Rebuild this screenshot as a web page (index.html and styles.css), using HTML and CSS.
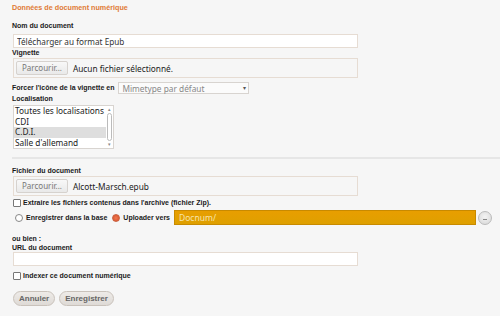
FILE: index.html
```html
<!DOCTYPE html>
<html lang="fr">
<head>
    <meta charset="UTF-8">
    <title>Données de document numérique</title>
    <link rel="stylesheet" href="styles.css">
</head>
<body>
    <form class="docnum">
        <h3 class="title">Données de document numérique</h3>

        <label class="lbl lbl-first" for="nom">Nom du document</label>
        <input class="text" type="text" id="nom" value="Télécharger au format Epub">

        <label class="lbl">Vignette</label>
        <div class="filebox">
            <span class="browse">Parcourir...</span>
            <span class="filename">Aucun fichier sélectionné.</span>
        </div>

        <div class="row row-force">
            <span class="lbl inline">Forcer l'icône de la vignette en</span>
            <div class="select">
                <span>Mimetype par défaut</span>
                <span class="caret">&#9662;</span>
            </div>
        </div>

        <label class="lbl">Localisation</label>
        <div class="listbox">
            <ul>
                <li>Toutes les localisations</li>
                <li>CDI</li>
                <li class="sel">C.D.I.</li>
                <li>Salle d'allemand</li>
            </ul>
            <div class="scroll">
                <span class="arrow">&#9652;</span>
                <span class="thumb"></span>
                <span class="arrow">&#9662;</span>
            </div>
        </div>

        <hr class="sep">

        <label class="lbl">Fichier du document</label>
        <div class="filebox">
            <span class="browse">Parcourir...</span>
            <span class="filename">Alcott-Marsch.epub</span>
        </div>

        <div class="row row-check">
            <span class="check"></span>
            <span class="lbl inline">Extraire les fichiers contenus dans l'archive (fichier Zip).</span>
        </div>

        <div class="row row-radio">
            <span class="radio"></span>
            <span class="lbl inline">Enregistrer dans la base</span>
            <span class="radio on"></span>
            <span class="lbl inline">Uploader vers</span>
            <div class="upload">Docnum/</div>
            <span class="dots"></span>
        </div>

        <label class="lbl lbl-or">ou bien :</label>
        <label class="lbl lbl-url" for="url">URL du document</label>
        <input class="text" type="text" id="url">

        <div class="row row-check2">
            <span class="check"></span>
            <span class="lbl inline">Indexer ce document numérique</span>
        </div>

        <div class="actions">
            <button type="button" class="btn">Annuler</button>
            <button type="button" class="btn">Enregistrer</button>
        </div>
    </form>
</body>
</html>
```

FILE: styles.css
```css
body {
    margin: 0;
    background: #f6f6f6;
    font-family: "Liberation Sans", Arial, sans-serif;
    color: #222;
}

.docnum {
    padding: 3px 0 0 12px;
}

.title {
    margin: 0;
    font-size: 7.2px;
    line-height: 10px;
    font-weight: bold;
    color: #e07a35;
}

.lbl {
    display: block;
    font-size: 7px;
    line-height: 10px;
    font-weight: bold;
    color: #1a1a1a;
    white-space: nowrap;
}

.lbl.inline {
    display: inline-block;
    flex-shrink: 0;
}

.lbl-first {
    margin-top: 8px;
}

.text {
    display: block;
    box-sizing: border-box;
    width: 345px;
    height: 14px;
    margin: 3px 0 0 1px;
    padding: 0 3px;
    border: 1px solid #e6dcd3;
    background: #fff;
    font-family: "Noto Sans", sans-serif;
    font-size: 8.2px;
    color: #333;
    outline: none;
}

.filebox {
    box-sizing: border-box;
    width: 345px;
    height: 20px;
    margin-left: 1px;
    border: 1px solid #e6dcd3;
    display: flex;
    align-items: center;
    padding-left: 2px;
    gap: 5px;
    white-space: nowrap;
}

.browse {
    box-sizing: border-box;
    height: 14px;
    padding: 0 5px;
    border: 1px solid #d6d2ce;
    border-radius: 2px;
    background: linear-gradient(#f8f8f8, #e9e9e9);
    font-family: "Noto Sans", sans-serif;
    font-size: 8px;
    line-height: 12px;
    color: #777;
}

.filename {
    font-family: "Noto Sans", sans-serif;
    font-size: 8.3px;
    color: #222;
}

.row {
    display: flex;
    align-items: center;
    white-space: nowrap;
}

.row-force {
    margin-top: 4px;
    height: 12px;
    gap: 4px;
}

.select {
    box-sizing: border-box;
    width: 131px;
    height: 12px;
    border: 1px solid #d8d4d0;
    background: #fbfbfb;
    display: flex;
    justify-content: space-between;
    align-items: center;
    padding: 0 2px 0 3px;
    font-family: "Noto Sans", sans-serif;
    font-size: 8.3px;
    color: #888;
}

.caret {
    font-size: 6px;
    color: #555;
}

.listbox {
    box-sizing: border-box;
    width: 101px;
    height: 44px;
    margin: 1px 0 0 1px;
    border: 1px solid #d8d4d0;
    background: #fff;
    display: flex;
    overflow: hidden;
}

.listbox ul {
    flex: 1;
    margin: 0;
    padding: 0;
    list-style: none;
    font-family: "Noto Sans", sans-serif;
    font-size: 8.3px;
    line-height: 10.5px;
    color: #222;
    white-space: nowrap;
    overflow: hidden;
}

.listbox li {
    padding-left: 1px;
}

.listbox li.sel {
    background: #dedede;
}

.scroll {
    width: 7px;
    flex-shrink: 0;
    display: flex;
    flex-direction: column;
    align-items: center;
    font-size: 5px;
    color: #888;
}

.scroll .arrow {
    height: 7px;
    line-height: 7px;
}

.scroll .thumb {
    flex: 1;
    width: 5px;
    border: 1px solid #bbb;
    border-radius: 3px;
    box-sizing: border-box;
}

.sep {
    margin: 8px 0 0 0;
    height: 0;
    border: none;
    border-top: 2px solid #e6e6e6;
}

.sep + .lbl {
    margin-top: 7px;
}

.row-check {
    margin-top: 2px;
    height: 10px;
    gap: 2px;
}

.check {
    box-sizing: border-box;
    flex-shrink: 0;
    width: 8px;
    height: 8px;
    margin-left: 1px;
    border: 1px solid #777;
    border-radius: 1px;
    background: #fff;
}

.row-radio {
    margin-top: 2px;
    height: 15px;
    gap: 3px;
}

.radio {
    box-sizing: border-box;
    flex-shrink: 0;
    width: 8px;
    height: 8px;
    margin-left: 3px;
    border: 1px solid #888;
    border-radius: 50%;
    background: #fff;
}

.radio.on {
    margin-left: 2px;
    border-color: #c86040;
    background: radial-gradient(circle, #f07850 0, #e0603a 60%);
}

.upload {
    box-sizing: border-box;
    flex-shrink: 0;
    width: 302px;
    height: 15px;
    margin-left: 1px;
    padding-left: 4px;
    border: 1px solid #c88a00;
    background: linear-gradient(#e89e00, #dea000);
    font-family: "Noto Sans", sans-serif;
    font-size: 8.5px;
    line-height: 13px;
    color: #f7e4ad;
}

.dots {
    box-sizing: border-box;
    flex-shrink: 0;
    width: 14px;
    height: 14px;
    margin-left: -1px;
    border: 1px solid #bbb;
    border-radius: 50%;
    background: radial-gradient(circle at 50% 40%, #f4f4f4, #d6d6d6);
    position: relative;
}

.dots::after {
    content: "";
    position: absolute;
    left: 4px;
    top: 7px;
    width: 4px;
    height: 1px;
    background: #888;
}

.lbl-or {
    margin-top: 9px;
    line-height: 9px;
}

.lbl-url {
    line-height: 9px;
}

.lbl-url + .text {
    margin-top: 0;
}

.row-check2 {
    margin-top: 4px;
    height: 11px;
    gap: 2px;
}

.actions {
    display: flex;
    gap: 4px;
    margin-top: 10px;
    margin-left: 1px;
}

.btn {
    height: 15px;
    padding: 0 5px;
    border: 1px solid #c9c2bb;
    border-radius: 8px;
    background: linear-gradient(#eeebe8, #dedad6);
    font-family: "Liberation Sans", Arial, sans-serif;
    font-size: 8px;
    font-weight: bold;
    color: #666;
    cursor: pointer;
}
```
